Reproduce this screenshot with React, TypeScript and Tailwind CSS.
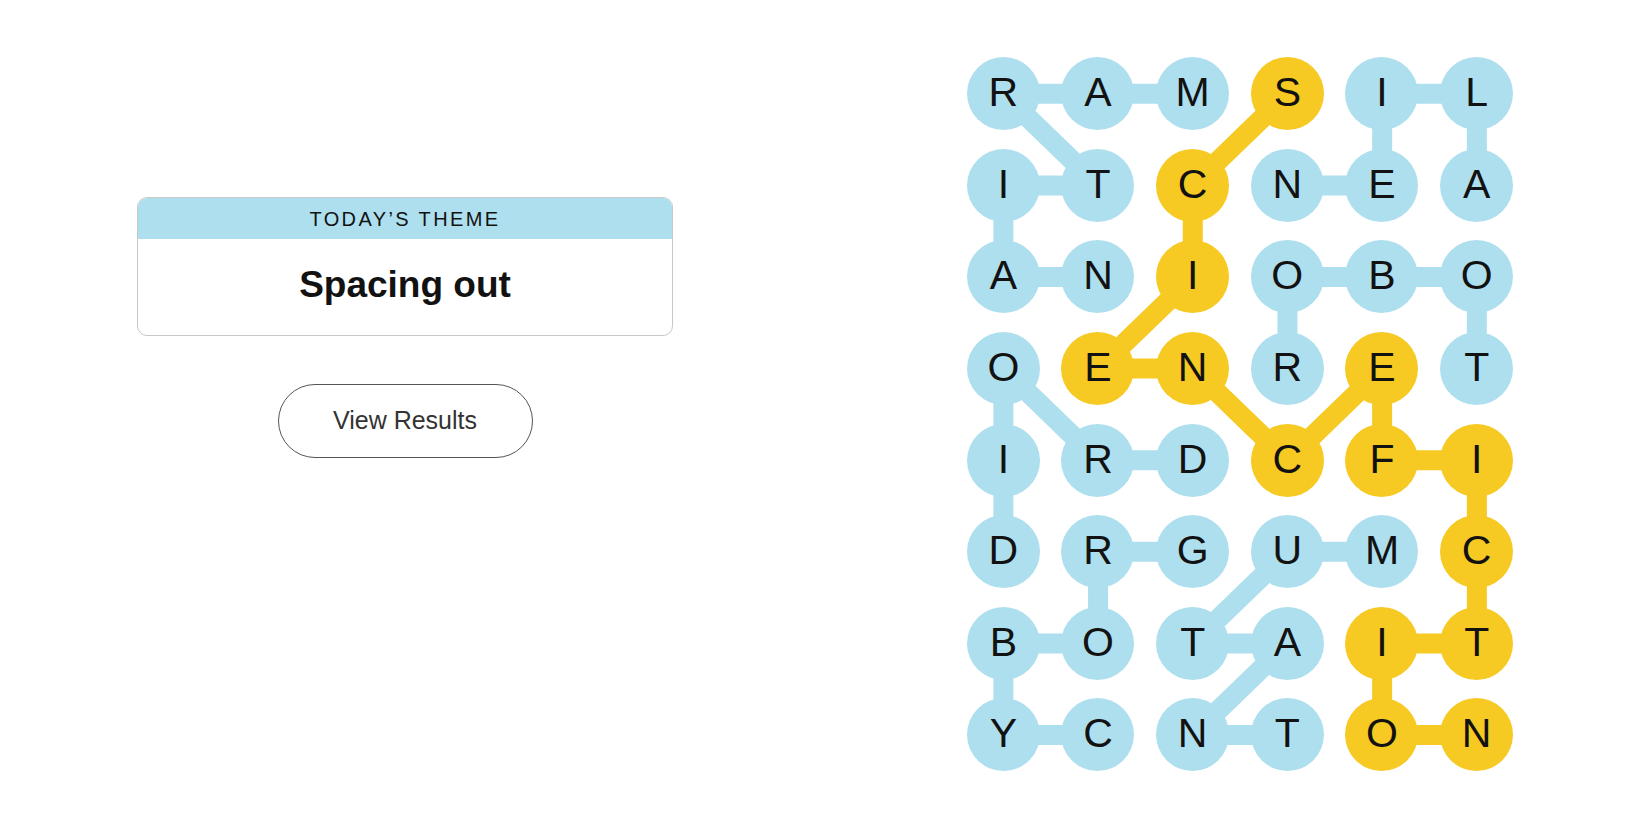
import React from "react";

const letters = [
  "RAMSIL",
  "ITCNEA",
  "ANIOBO",
  "OENRET",
  "IRDCFI",
  "DRGUMC",
  "BOTAIT",
  "YCNTON",
];

// words found, as [row, col] paths
const blueWords: number[][][] = [
  [[0, 2], [0, 1], [0, 0], [1, 1], [1, 0], [2, 0], [2, 1]], // martian
  [[1, 5], [0, 5], [0, 4], [1, 4], [1, 3]], // alien
  [[3, 3], [2, 3], [2, 4], [2, 5], [3, 5]], // robot
  [[4, 2], [4, 1], [3, 0], [4, 0], [5, 0]], // droid
  [[7, 1], [7, 0], [6, 0], [6, 1], [5, 1], [5, 2]], // cyborg
  [[5, 4], [5, 3], [6, 2], [6, 3], [7, 2], [7, 3]], // mutant
];

const spangram: number[][] = [
  [0, 3], [1, 2], [2, 2], [3, 1], [3, 2], [4, 3], [3, 4],
  [4, 4], [4, 5], [5, 5], [6, 5], [6, 4], [7, 4], [7, 5],
];

const CELL_W = 94.7;
const CELL_H = 91.6;
const BLUE = "#aedfee";
const YELLOW = "#f6c923";

const isSpangram = (r: number, c: number) =>
  spangram.some(([sr, sc]) => sr === r && sc === c);

function pathPoints(path: number[][]) {
  return path
    .map(([r, c]) => `${CELL_W / 2 + c * CELL_W},${CELL_H / 2 + r * CELL_H}`)
    .join(" ");
}

function Board() {
  return (
    <div className="relative w-[568px]">
      <svg
        className="absolute inset-0 z-0"
        width={568}
        height={733}
        viewBox="0 0 568 733"
      >
        {blueWords.map((w, i) => (
          <polyline
            key={i}
            points={pathPoints(w)}
            fill="none"
            stroke={BLUE}
            strokeWidth={20}
            strokeLinejoin="round"
          />
        ))}
        <polyline
          points={pathPoints(spangram)}
          fill="none"
          stroke={YELLOW}
          strokeWidth={20}
          strokeLinejoin="round"
        />
      </svg>
      <div className="relative z-10 grid grid-cols-6">
        {letters.map((row, r) =>
          row.split("").map((ch, c) => (
            <div
              key={`${r}-${c}`}
              className="flex h-[91.6px] items-center justify-center"
            >
              <div
                className={`flex h-[73px] w-[73px] items-center justify-center rounded-full pb-[2px] text-[41px] leading-none text-[#121212] ${
                  isSpangram(r, c) ? "bg-[#f6c923]" : "bg-[#aedfee]"
                }`}
              >
                {ch}
              </div>
            </div>
          ))
        )}
      </div>
    </div>
  );
}

export default function App() {
  return (
    <main className="flex h-[825px] w-full bg-white font-['Liberation_Sans',Arial,sans-serif]">
      <section className="flex w-[810px] flex-col items-center pt-[197px]">
        <div className="w-[536px] overflow-hidden rounded-[10px] border border-[#c8c8c8]">
          <div className="flex h-[41px] items-center justify-center bg-[#aedfee] text-[20px] tracking-[0.12em] text-[#121212]">
            TODAY’S THEME
          </div>
          <div className="flex h-[96px] items-center justify-center pb-[4px] text-[37px] font-bold text-[#121212]">
            Spacing out
          </div>
        </div>
        <button className="mt-[48px] flex h-[74px] w-[255px] items-center justify-center rounded-full border border-[#555] bg-white text-[25px] text-[#333]">
          View Results
        </button>
      </section>
      <section className="pl-[146px] pt-[48px]">
        <Board />
      </section>
    </main>
  );
}
